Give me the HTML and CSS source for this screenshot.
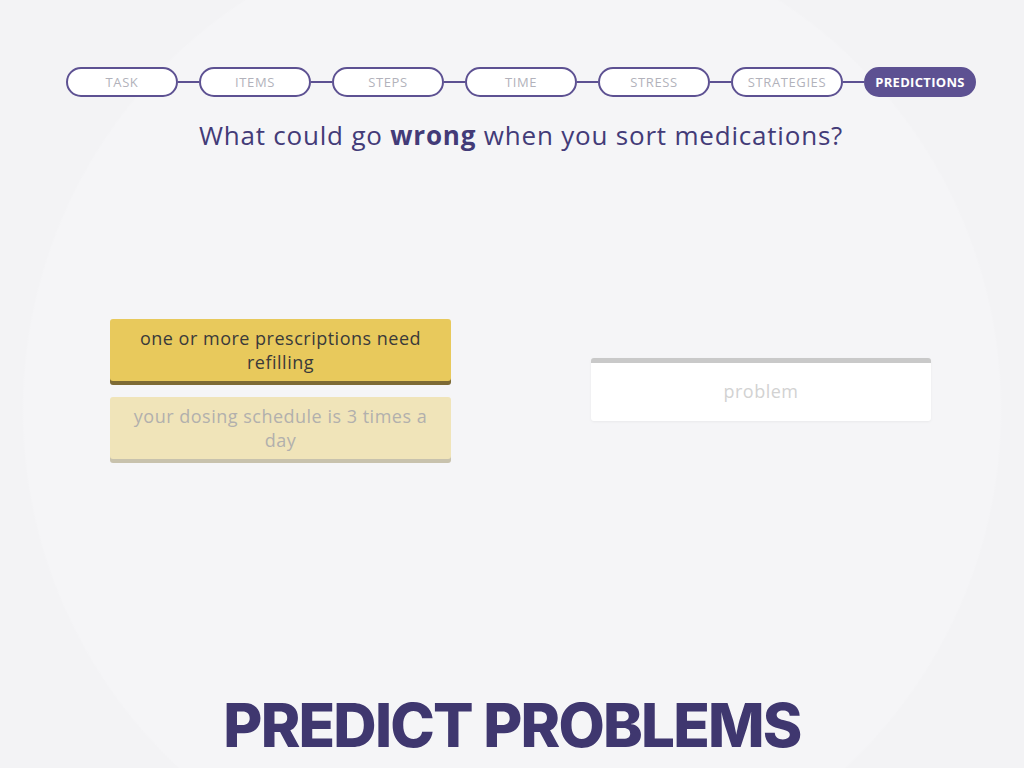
FILE: index.html
```html
<!DOCTYPE html>
<html lang="en">
<head>
<meta charset="utf-8">
<title>Predict problems</title>
<link rel="stylesheet" href="styles.css">
</head>
<body>
<div class="page">
  <nav class="stepper">
    <span class="step">Task</span><span class="link"></span>
    <span class="step">Items</span><span class="link"></span>
    <span class="step">Steps</span><span class="link"></span>
    <span class="step">Time</span><span class="link"></span>
    <span class="step">Stress</span><span class="link"></span>
    <span class="step">Strategies</span><span class="link"></span>
    <span class="step active">Predictions</span>
  </nav>
  <h1 class="question">What could go <strong>wrong</strong> when you sort medications?</h1>
  <section class="board">
    <div class="options">
      <div class="card">one or more prescriptions need refilling</div>
      <div class="card faded">your dosing schedule is 3 times a day</div>
    </div>
    <div class="drop">
      <div class="slot">problem</div>
    </div>
  </section>
  <h2 class="title">PREDICT PROBLEMS</h2>
</div>
</body>
</html>
```

FILE: styles.css
```css
html, body {
  margin: 0;
  padding: 0;
}
body {
  background-color: #f3f3f5;
  background-image:
    radial-gradient(circle at 512px 410px, #f5f5f7 0, #f5f5f7 488px, rgba(243,243,245,0) 490px);
  font-family: "Open Sans", "Liberation Sans", sans-serif;
  width: 1024px;
  height: 768px;
  overflow: hidden;
}
.page {
  height: 768px;
  display: flex;
  flex-direction: column;
  align-items: center;
}
.stepper {
  margin-top: 67px;
  display: flex;
  align-items: center;
  padding-left: 18px;
}
.step {
  box-sizing: border-box;
  width: 112px;
  height: 30px;
  border: 2px solid #5d5192;
  border-radius: 15px;
  display: flex;
  align-items: center;
  justify-content: center;
  font-size: 13px;
  font-weight: 500;
  text-transform: uppercase;
  color: #b2b2bb;
  background: #fff;
  letter-spacing: 0.6px;
}
.step.active {
  background: #5d5192;
  color: #fff;
  font-weight: 700;
  letter-spacing: 0.3px;
}
.link {
  width: 21px;
  height: 2px;
  background: #5d5192;
}
.question {
  margin: 20px 0 0 18px;
  font-size: 26px;
  font-weight: 400;
  color: #433b78;
  line-height: 36px;
  letter-spacing: 0.8px;
}
.question strong {
  font-weight: 700;
}
.board {
  margin-top: 166px;
  align-self: flex-start;
  margin-left: 110px;
  display: grid;
  grid-template-columns: 341px 340px;
  column-gap: 140px;
  align-items: center;
}
.options {
  display: flex;
  flex-direction: column;
  gap: 16px;
  padding-bottom: 4px;
}
.card {
  box-sizing: border-box;
  height: 62px;
  background: #e8c95c;
  border-radius: 3px;
  box-shadow: 0 4px 0 #7d6a35;
  display: flex;
  align-items: center;
  justify-content: center;
  text-align: center;
  padding: 0 18px 0;
  font-size: 18px;
  letter-spacing: 0.5px;
  line-height: 24px;
  color: #3a3a3a;
}
.card.faded {
  background: #f0e4b9;
  box-shadow: 0 4px 0 #c8c2ad;
  color: #b2b0ad;
}
.drop {
  padding-bottom: 3px;
}
.slot {
  box-sizing: border-box;
  height: 63px;
  background: #fff;
  border-top: 5px solid #c9c9c9;
  border-radius: 3px;
  box-shadow: 0 1px 3px rgba(0,0,0,0.05);
  display: flex;
  align-items: center;
  justify-content: center;
  font-size: 18px;
  letter-spacing: 0.5px;
  color: #d2d2d2;
  padding-bottom: 2px;
}
.title {
  margin: auto 0 11px 0;
  font-family: "Inter", "Liberation Sans", sans-serif;
  font-weight: 800;
  font-size: 60px;
  line-height: 64px;
  color: #3f376f;
  letter-spacing: -1.8px;
}
```
